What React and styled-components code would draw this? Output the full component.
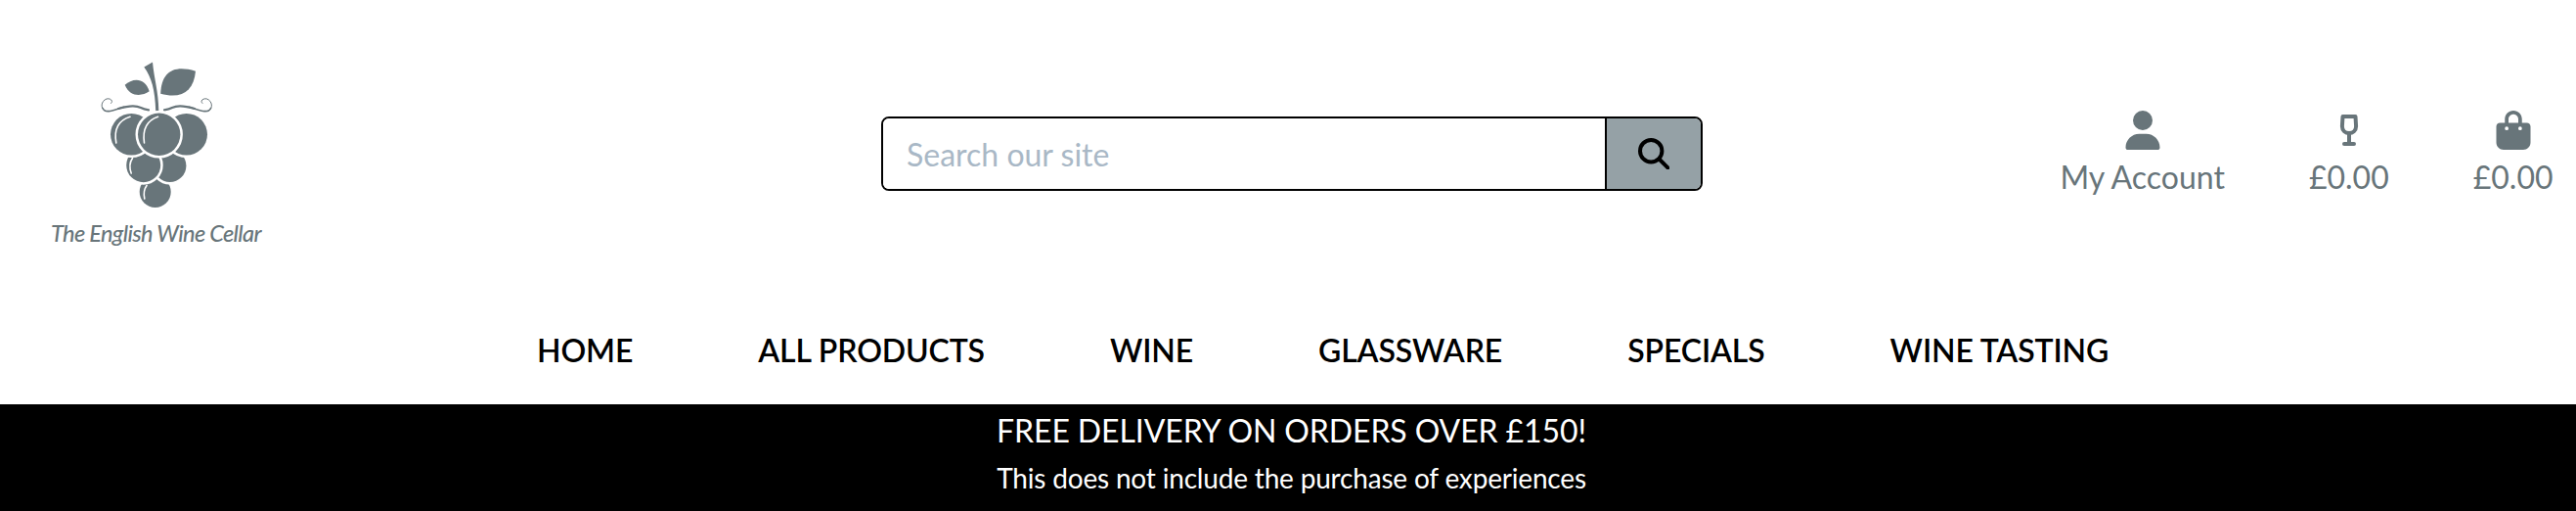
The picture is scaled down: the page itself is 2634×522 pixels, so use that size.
import React from "react";
import styled, { createGlobalStyle } from "styled-components";
import { FaUser, FaBagShopping } from "react-icons/fa6";

const slate = "#68757a";

const GlobalStyle = createGlobalStyle`
  *, *::before, *::after { box-sizing: border-box; }
  body { margin: 0; background: #fff; font-family: Lato, "Liberation Sans", sans-serif; font-size: 32px; }
`;

const Page = styled.div`
  height: 522px;
  overflow: hidden;
  display: flex;
  flex-direction: column;
`;

const Header = styled.header`
  height: 317px;
  display: grid;
  grid-template-columns: 901px 840px 1fr;
`;

const Brand = styled.a`
  padding: 60px 0 0 52px;
  width: 270px;
  display: flex;
  flex-direction: column;
  color: ${slate};
`;

const Grapes = styled.svg`
  width: 218px;
  height: 156px;
  display: block;
`;

const BrandName = styled.span`
  font-size: 23.5px;
  font-style: italic;
  font-weight: 500;
  letter-spacing: -0.65px;
  line-height: 28px;
  margin-top: 8px;
  white-space: nowrap;
`;

const SearchForm = styled.form`
  display: flex;
  margin-top: 119px;
  height: 76px;
  border: 2px solid #000;
  border-radius: 8px;
  overflow: hidden;
`;

const SearchInput = styled.input`
  flex: 1;
  min-width: 0;
  border: 0;
  padding: 0 24px;
  font: inherit;
  outline: none;
  background: #fff;
  &::placeholder { color: #a9b8c6; opacity: 1; }
`;

const SearchButton = styled.button`
  width: 98px;
  border: 0;
  border-left: 2px solid #000;
  padding: 0;
  background: #95a1a6;
  color: #000;
  display: flex;
  align-items: center;
  justify-content: center;
`;

const Actions = styled.div`
  display: flex;
  justify-content: flex-end;
  gap: 86px;
  padding: 113px 23.5px 0 0;
`;

const Action = styled.a`
  display: flex;
  flex-direction: column;
  align-items: center;
  color: ${slate};
  line-height: 48px;
  gap: 4px;
  svg { display: block; height: 40px; }
`;

const Nav = styled.nav`
  height: 96px;
  display: flex;
  gap: 128px;
  padding: 17px 0 0 549px;
`;

const NavLink = styled.a`
  font-weight: 600;
  letter-spacing: -0.12px;
  line-height: 48px;
  white-space: nowrap;
`;

const Banner = styled.section`
  flex: 1;
  background: #000;
  color: #fff;
  display: flex;
  flex-direction: column;
  align-items: center;
  padding-left: 7px;
`;

const BannerLine = styled.p`
  margin: 0;
  font-size: ${(p) => (p.$small ? "28px" : "32px")};
  line-height: ${(p) => (p.$small ? "42px" : "54px")};
  letter-spacing: ${(p) => (p.$small ? "-0.18px" : "-0.1px")};
`;

const links = ["HOME", "ALL PRODUCTS", "WINE", "GLASSWARE", "SPECIALS", "WINE TASTING"];

const GrapeLogo = () => (
  <Grapes viewBox="52 60 218 156" fill={slate}>
    <path d="M147.3 68.5 L156 63.5 C157.5 80 162 93 162.3 113.3 L159.2 113.3 C158.5 92 155 79 147.3 68.5Z" />
    <path d="M127.7 86.7 C135 80 148 78 152.7 93.3 C145 98.5 133 99.5 127.7 86.7Z" />
    <path d="M164.2 95.8 C165 73 178 66 200 72.7 C198 93 186 101.5 164.2 95.8Z" />
    <g fill="none" stroke={slate} strokeLinecap="round">
      <path strokeWidth="1" d="M113.5 105.5 C116.5 103 112.5 100 109 101 C103.5 103 102 110.5 107.5 113.4" />
      <path strokeWidth="1.6" d="M105 110.5 C108 117.5 119 111 127 109.2" />
      <path strokeWidth="2.2" d="M121 111 C130 108.3 138 107 144 110 Q147 111.8 152 112.3" />
      <path strokeWidth="1" d="M207 105.5 C204 103 208 100 211.5 101 C217 103 218.5 110.5 213 113.4" />
      <path strokeWidth="1.6" d="M215.5 110.5 C212.5 117.5 201 111 193 109.2" />
      <path strokeWidth="2.2" d="M199 111 C190 108.3 182 107 176 110 Q173 111.8 168 112.3" />
    </g>
    <g stroke="#fff" strokeWidth="5" paintOrder="stroke">
      <circle cx="158.7" cy="196" r="16" />
      <circle cx="173.7" cy="169.3" r="16.7" />
      <circle cx="146.7" cy="168.7" r="17.5" />
      <circle cx="134.3" cy="137.3" r="21.3" />
      <circle cx="190.7" cy="137.3" r="21.3" />
      <circle cx="162.7" cy="137.3" r="21.7" />
    </g>
    <g fill="none" stroke="#fff" strokeWidth="1.6" strokeLinecap="round">
      <path d="M118.8 146 Q115 125 133 119.3" />
      <path d="M147.5 146 Q144.5 125 161.5 119.3" />
      <path d="M134.2 177 Q131 168 135.5 161.5" />
      <path d="M147.8 203 Q146 195 150 189.5" />
    </g>
  </Grapes>
);

const SearchIcon = () => (
  <svg width="32" height="32" viewBox="0 0 32 32" fill="none" stroke="#000" strokeWidth="4" strokeLinecap="round">
    <circle cx="13.2" cy="13.2" r="11.2" />
    <path d="M21.5 21.5 L30.4 30.4" />
  </svg>
);

const GlassIcon = () => (
  <svg width="40" height="40" viewBox="0 0 40 40" fill="none" stroke={slate} strokeWidth="4" strokeLinejoin="round" strokeLinecap="round">
    <path d="M13.5 6 H26.5 L27.1 16 C27.1 25.3 12.9 25.3 12.9 16Z M20 24 V34 M15 34 H25" />
  </svg>
);

export default function App() {
  return (
    <Page>
      <GlobalStyle />
      <Header>
        <Brand>
          <GrapeLogo />
          <BrandName>The English Wine Cellar</BrandName>
        </Brand>
        <SearchForm>
          <SearchInput placeholder="Search our site" />
          <SearchButton type="button" aria-label="Search"><SearchIcon /></SearchButton>
        </SearchForm>
        <Actions>
          <Action><FaUser size={40} />My Account</Action>
          <Action><GlassIcon />£0.00</Action>
          <Action><FaBagShopping size={40} />£0.00</Action>
        </Actions>
      </Header>
      <Nav>{links.map((l) => <NavLink key={l}>{l}</NavLink>)}</Nav>
      <Banner>
        <BannerLine>FREE DELIVERY ON ORDERS OVER £150!</BannerLine>
        <BannerLine $small>This does not include the purchase of experiences</BannerLine>
      </Banner>
    </Page>
  );
}
